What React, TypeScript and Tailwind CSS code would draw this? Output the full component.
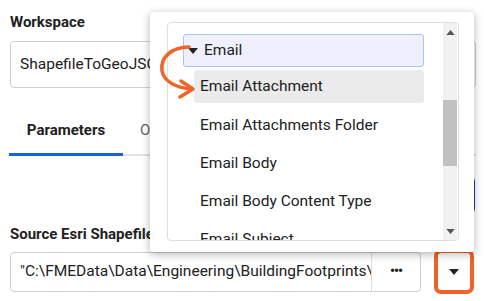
const items = ['Email Attachments Folder', 'Email Body', 'Email Body Content Type', 'Email Subject'];

function Caret({ up = false, className = '' }: { up?: boolean; className?: string }) {
  return (
    <svg width="10" height="6" viewBox="0 0 10 6" className={className}>
      <path d={up ? 'M0 6 L5 0 L10 6 Z' : 'M0 0 L10 0 L5 6 Z'} fill="currentColor" />
    </svg>
  );
}

export default function App() {
  return (
    <div className="relative w-[484px] h-[301px] overflow-hidden bg-white font-['Roboto',sans-serif] text-[#212121]">
      {/* page */}
      <div className="flex flex-col px-[10px] pt-[13px]">
        <div className="text-[15px] font-bold leading-[18px]">Workspace</div>
        <div className="mt-[10px] flex h-[47px] w-[466px] items-center rounded-[4px] border border-[#cfcfcf] px-[9px] text-[15.5px]">
          ShapefileToGeoJSON.fmw
        </div>

        <div className="mt-[24px] flex h-[41px] items-start text-[15px]">
          <div className="w-[114px] -ml-[1px] flex flex-col items-center">
            <span className="font-bold leading-[36px]">Parameters</span>
          </div>
          <span className="ml-[17px] leading-[36px] text-[#666]">Options</span>
        </div>
        <div className="-ml-[1px] flex h-[3px] w-[467px] items-end">
          <div className="h-[3px] w-[114px] bg-[#1565d8]" />
          <div className="h-[2px] flex-1 bg-[#e2e2e2]" />
        </div>

        <div className="mt-[21px] flex justify-end">
          <div className="h-[36px] w-[90px] -mr-[1px] rounded-[4px] border border-[#1a3fa8]" />
        </div>

        <div className="mt-[12px] text-[15px] font-bold leading-[18px]">Source Esri Shapefile(s)</div>
        <div className="mt-[6px] flex items-center gap-[13px]">
          <div className="flex h-[40px] w-[411px] items-center rounded-[4px] border border-[#cfcfcf]">
            <div className="flex-1 overflow-hidden whitespace-nowrap pl-[9px] text-[15.5px]">
              "C:\FMEData\Data\Engineering\BuildingFootprints\u.shp"
            </div>
            <div className="flex h-full w-[49px] items-center justify-center border-l border-[#dcdcdc] text-[14px] font-bold tracking-[-1px]">
              •••
            </div>
          </div>
          <div className="flex h-[45px] w-[44px] items-center justify-center rounded-[7px] border-[4px] border-[#f0622a]">
            <Caret className="text-[#222]" />
          </div>
        </div>
      </div>

      {/* dropdown popup */}
      <div className="absolute left-[150px] top-[12px] h-[240px] w-[324px] rounded-[3px] bg-white pl-[17px] pt-[10px] shadow-[0_2px_8px_rgba(0,0,0,0.3)]">
        <div className="flex h-[219px] w-[292px] overflow-hidden rounded-[4px] border border-[#dedede]">
          <div className="flex flex-1 flex-col overflow-hidden text-[15.5px]">
            <div className="ml-[15px] mt-[11px] flex h-[33px] w-[241px] shrink-0 items-center rounded-[3px] border border-[#a9c3f5] bg-[#eef1fd] pl-[4px]">
              <Caret className="text-[#222]" />
              <span className="ml-[6px]">Email</span>
            </div>
            <div className="ml-[26px] mt-[3px] flex h-[33px] w-[230px] shrink-0 items-center rounded-[3px] bg-[#ebebeb] pl-[6px]">
              Email Attachment
            </div>
            <div className="mt-[4px] flex flex-col">
              {items.map((t) => (
                <div key={t} className="ml-[32px] flex h-[38px] shrink-0 items-center whitespace-nowrap">
                  {t}
                </div>
              ))}
            </div>
          </div>
          <div className="mr-[1px] flex w-[14px] flex-col items-center bg-[#f1f1f1]">
            <Caret up className="mt-[7px] h-[5px] w-[9px] text-[#555]" />
            <div className="mt-[65px] h-[66px] w-[14px] bg-[#c1c1c1]" />
            <div className="flex-1" />
            <Caret className="mb-[6px] h-[5px] w-[9px] text-[#555]" />
          </div>
        </div>
      </div>

      {/* annotation arrow */}
      <svg className="pointer-events-none absolute left-0 top-0" width="484" height="301">
        <path
          d="M189 47 C 171 47, 160 58, 162 71 C 164 82, 177 88, 192 89"
          fill="none"
          stroke="#f2632a"
          strokeWidth="3.5"
          strokeLinecap="round"
        />
        <path d="M181 81 L193 89 L180 97" fill="none" stroke="#f2632a" strokeWidth="3.5" strokeLinecap="round" strokeLinejoin="round" />
      </svg>
    </div>
  );
}
